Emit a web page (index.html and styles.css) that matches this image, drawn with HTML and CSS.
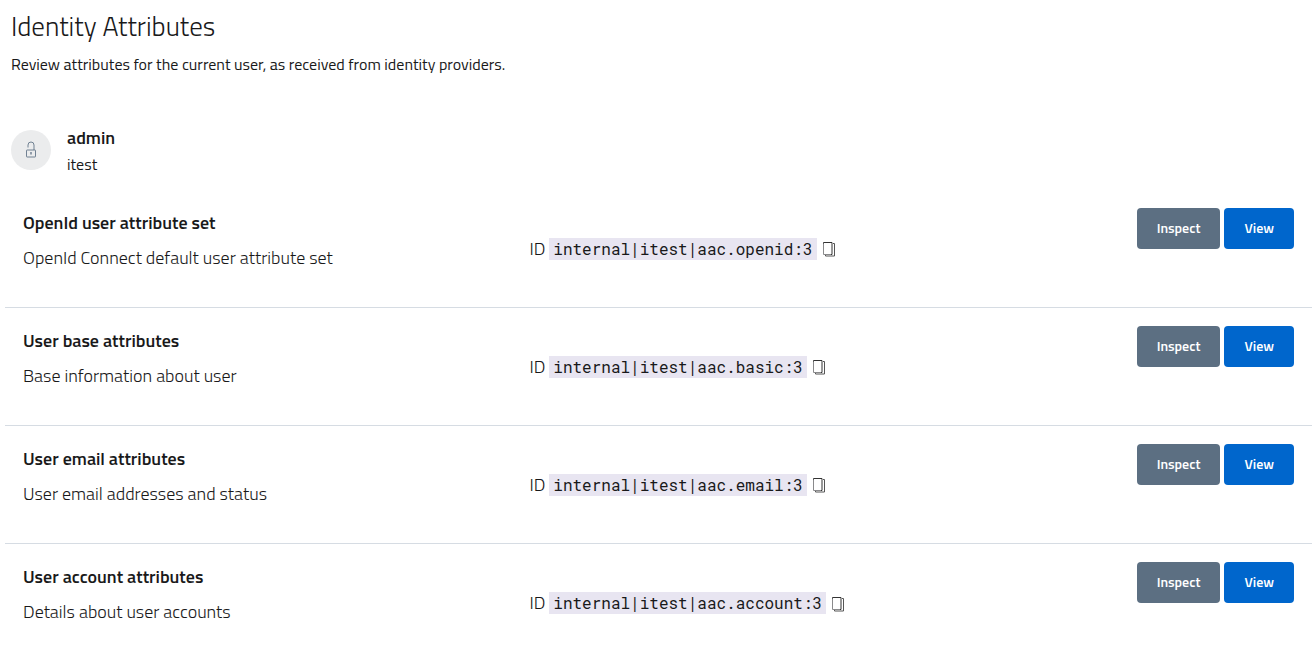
FILE: index.html
```html
<!DOCTYPE html>
<html lang="en">
<head>
<meta charset="utf-8">
<title>Identity Attributes</title>
<link rel="stylesheet" href="styles.css">
</head>
<body>
<svg class="sprite" aria-hidden="true">
  <symbol id="copy" viewBox="0 0 14 16"><path d="M1.500 2v11.500H9" fill="none" stroke="#8a8a8c"/><path d="M1.500 2.500v-1h8.500v12H9" fill="none" stroke="#333"/><path d="M11 2.500h1.500v12.500H3.500V14" fill="none" stroke="#555" stroke-linejoin="round"/></symbol>
</svg>
<main class="page">
  <header class="heading">
    <h1 class="title">Identity Attributes</h1>
    <p class="lead">Review attributes for the current user, as received from identity providers.</p>
  </header>
  <section class="user">
    <span class="avatar">
      <svg width="12" height="18" viewBox="0 0 12 18" fill="none" stroke="#5c6f82" stroke-opacity=".85" aria-hidden="true"><path d="M3 6.500V4a3 3 0 0 1 6 0V9"/><rect x="1.500" y="9" width="9" height="7" rx=".5"/><path d="M6 11v2.500" stroke-width="1.500"/></svg>
    </span>
    <div class="who">
      <h2 class="name">admin</h2>
      <p class="realm">itest</p>
    </div>
  </section>
  <ul class="sets">
    <li class="set">
      <div class="info"><h3 class="set-name">OpenId user attribute set</h3><p class="set-text">OpenId Connect default user attribute set</p></div>
      <div class="ident"><span>ID</span><code class="code">internal|itest|aac.openid:3</code><button class="copy" aria-label="Copy ID"><svg width="14" height="16"><use href="#copy"/></svg></button></div>
      <div class="actions"><button class="btn btn-inspect">Inspect</button><button class="btn btn-view">View</button></div>
    </li>
    <li class="set">
      <div class="info"><h3 class="set-name">User base attributes</h3><p class="set-text">Base information about user</p></div>
      <div class="ident"><span>ID</span><code class="code">internal|itest|aac.basic:3</code><button class="copy" aria-label="Copy ID"><svg width="14" height="16"><use href="#copy"/></svg></button></div>
      <div class="actions"><button class="btn btn-inspect">Inspect</button><button class="btn btn-view">View</button></div>
    </li>
    <li class="set">
      <div class="info"><h3 class="set-name">User email attributes</h3><p class="set-text">User email addresses and status</p></div>
      <div class="ident"><span>ID</span><code class="code">internal|itest|aac.email:3</code><button class="copy" aria-label="Copy ID"><svg width="14" height="16"><use href="#copy"/></svg></button></div>
      <div class="actions"><button class="btn btn-inspect">Inspect</button><button class="btn btn-view">View</button></div>
    </li>
    <li class="set">
      <div class="info"><h3 class="set-name">User account attributes</h3><p class="set-text">Details about user accounts</p></div>
      <div class="ident"><span>ID</span><code class="code">internal|itest|aac.account:3</code><button class="copy" aria-label="Copy ID"><svg width="14" height="16"><use href="#copy"/></svg></button></div>
      <div class="actions"><button class="btn btn-inspect">Inspect</button><button class="btn btn-view">View</button></div>
    </li>
  </ul>
</main>
</body>
</html>
```
FILE: styles.css
```css
* { box-sizing: border-box; }
body {
  margin: 0;
  background: #fff;
  color: #19191a;
  font-family: "Titillium Web", Roboto, sans-serif;
  font-size: 16px;
  line-height: 24px;
}
h1, h2, h3, p, ul { margin: 0; padding: 0; }
.sprite { display: none; }
.page { padding: 8px 1px 0 5px; }
.heading { padding: 0 6px; }
.title { font-size: 27px; font-weight: 300; line-height: 36px; }
.lead { margin-top: 8px; }
.user { display: flex; align-items: center; gap: 16px; margin-top: 48px; padding: 0 6px; }
.avatar {
  display: flex;
  align-items: center;
  justify-content: center;
  width: 40px;
  height: 40px;
  border-radius: 50%;
  background: #ebeced;
}
.name { font-size: 18px; font-weight: 600; line-height: 28px; }
.sets { margin-top: 14px; list-style: none; }
.set {
  display: grid;
  grid-template-columns: calc(40% - 2px) 2fr 1fr;
  min-height: 118px;
  padding: 18px;
  border-bottom: 1px solid #d6dce3;
}
.set:last-child { border-bottom: 0; }
.set-name { font-size: 18px; font-weight: 600; line-height: 30px; }
.set-text { margin-top: 6px; font-size: 18px; font-weight: 300; line-height: 28px; }
.ident { display: flex; align-items: center; align-self: center; font-size: 18px; font-weight: 300; }
.code {
  margin-left: 4px;
  padding: 0 4px;
  background: #e8e5f1;
  font-family: "Roboto Mono", "Liberation Mono", monospace;
  font-size: 16px;
  font-weight: 400;
  line-height: 22px;
}
.copy { display: flex; margin-left: 5px; padding: 1px 0 0; border: 0; background: none; }
.actions { display: flex; align-items: flex-start; justify-content: flex-end; gap: 4px; }
.btn {
  height: 41px;
  padding: 0 20px 2px;
  border: 0;
  border-radius: 4px;
  color: #fff;
  font: 600 14px/20px "Titillium Web", Roboto, sans-serif;
}
.btn-inspect { background: #5c6f82; }
.btn-view { background: #06c; }
```
